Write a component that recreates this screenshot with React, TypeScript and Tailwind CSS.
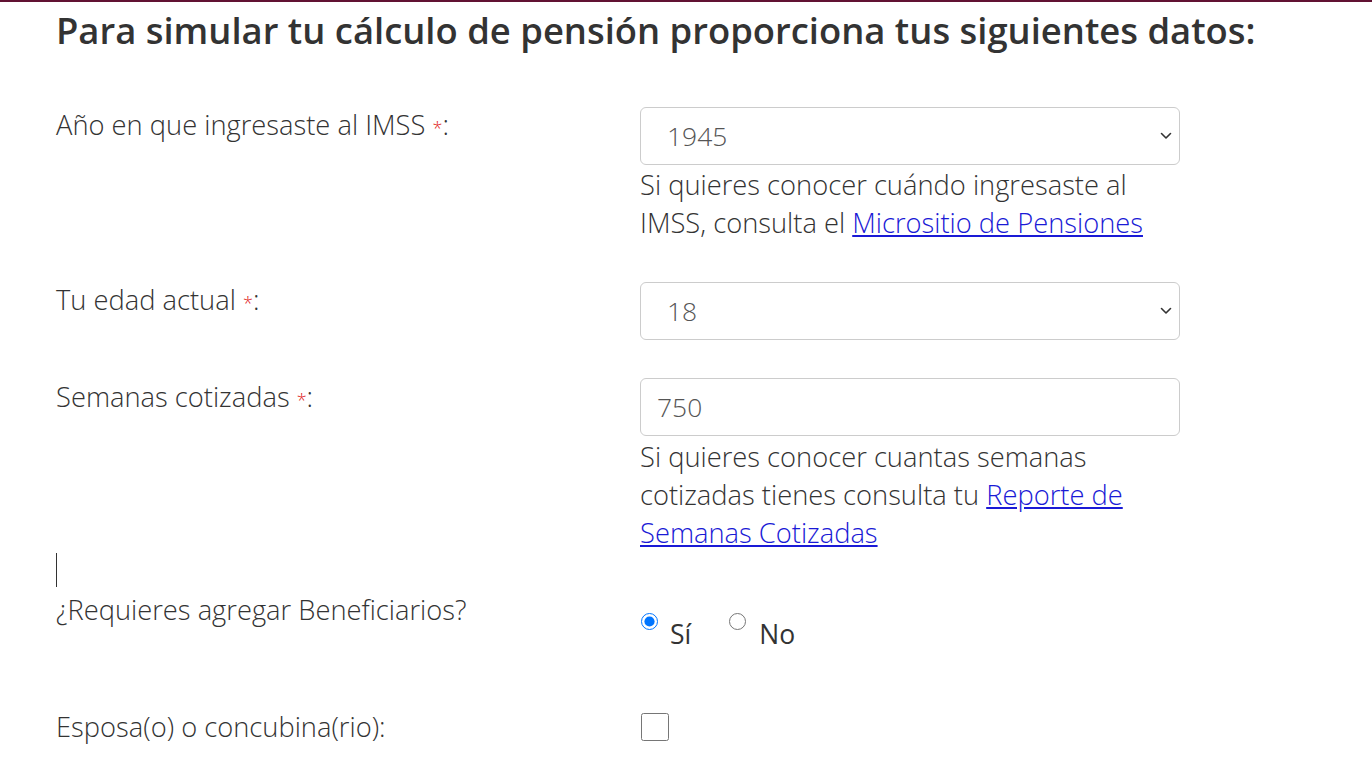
import { useState } from "react";

const Required = () => <span className="text-[18px] text-[#e02020] align-top relative top-[3px]">*</span>;

const Chevron = () => (
  <svg
    className="pointer-events-none absolute right-[8px] top-1/2 -translate-y-1/2"
    width="12"
    height="8"
    viewBox="0 0 12 8"
    fill="none"
  >
    <path d="M1.5 1.5 6 6l4.5-4.5" stroke="#333" strokeWidth="1.6" strokeLinecap="round" strokeLinejoin="round" />
  </svg>
);

const App = () => {
  const [year, setYear] = useState("1945");
  const [age, setAge] = useState("18");
  const [weeks, setWeeks] = useState("750");
  const [beneficiaries, setBeneficiaries] = useState("si");
  const [spouse, setSpouse] = useState(false);

  const years = Array.from({ length: 80 }, (_, i) => String(1945 + i));
  const ages = Array.from({ length: 83 }, (_, i) => String(18 + i));

  return (
    <div className="min-h-screen bg-white border-t-2 border-[#611232] font-['Open_Sans',sans-serif] text-[#333]">
      <div className="pl-[56px]">
        <h2 className="pt-[7px] text-[36.4px] font-semibold leading-[43px] text-[#333]">
          Para simular tu cálculo de pensión proporciona tus siguientes datos:
        </h2>

        <form className="mt-[54px] text-[27.3px] font-light leading-[38px]">
          {/* Año de ingreso */}
          <div className="grid grid-cols-[584px_540px]">
            <label className="text-[#333]">
              Año en que ingresaste al IMSS <Required />:
            </label>
            <div>
              <div className="relative mt-px">
                <select
                  value={year}
                  onChange={(e) => setYear(e.target.value)}
                  className="h-[58px] w-full appearance-none rounded-[6px] border border-[#ccc] bg-white pl-[26px] text-[26.4px] font-light text-[#555] outline-none"
                >
                  {years.map((y) => (
                    <option key={y} value={y}>
                      {y}
                    </option>
                  ))}
                </select>
                <Chevron />
              </div>
              <p className="mt-px">
                Si quieres conocer cuándo ingresaste al IMSS, consulta el{" "}
                <a href="#" className="text-[#1a1ad6] underline">
                  Micrositio de Pensiones
                </a>
              </p>
            </div>
          </div>

          {/* Edad */}
          <div className="mt-[39px] grid grid-cols-[584px_540px]">
            <label className="text-[#333]">
              Tu edad actual <Required />:
            </label>
            <div className="relative mt-px">
              <select
                value={age}
                onChange={(e) => setAge(e.target.value)}
                className="h-[58px] w-full appearance-none rounded-[6px] border border-[#ccc] bg-white pl-[26px] text-[26.4px] font-light text-[#555] outline-none"
              >
                {ages.map((a) => (
                  <option key={a} value={a}>
                    {a}
                  </option>
                ))}
              </select>
              <Chevron />
            </div>
          </div>

          {/* Semanas cotizadas */}
          <div className="mt-[38px] grid grid-cols-[584px_540px]">
            <label className="text-[#333]">
              Semanas cotizadas <Required />:
            </label>
            <div>
              <input
                type="text"
                value={weeks}
                onChange={(e) => setWeeks(e.target.value)}
                className="h-[58px] w-full rounded-[6px] border border-[#ccc] bg-white pl-[16px] text-[26.4px] font-light text-[#555] outline-none"
              />
              <p className="mt-[2px]">
                Si quieres conocer cuantas semanas cotizadas tienes consulta tu{" "}
                <a href="#" className="text-[#1a1ad6] underline">
                  Reporte de Semanas Cotizadas
                </a>
              </p>
            </div>
          </div>

          <div className="mt-px h-[34px] w-px bg-[#333]" />

          {/* Beneficiarios */}
          <div className="mt-[4px] grid grid-cols-[584px_540px]">
            <label className="text-[#333]">¿Requieres agregar Beneficiarios?</label>
            <div className="flex pt-[22px] text-[26.5px] font-normal">
              <label className="flex items-start">
                <input
                  type="radio"
                  name="beneficiarios"
                  checked={beneficiaries === "si"}
                  onChange={() => setBeneficiaries("si")}
                  className="m-0 ml-px h-[17px] w-[17px]"
                />
                <span className="ml-[12px] mt-[2px]">Sí</span>
              </label>
              <label className="ml-[38px] flex items-start">
                <input
                  type="radio"
                  name="beneficiarios"
                  checked={beneficiaries === "no"}
                  onChange={() => setBeneficiaries("no")}
                  className="m-0 h-[17px] w-[17px]"
                />
                <span className="ml-[13px] mt-[2px]">No</span>
              </label>
            </div>
          </div>

          {/* Esposa */}
          <div className="mt-[55px] grid grid-cols-[584px_540px]">
            <label className="text-[#333]">Esposa(o) o concubina(rio):</label>
            <div className="pt-[5px]">
              <input
                type="checkbox"
                checked={spouse}
                onChange={(e) => setSpouse(e.target.checked)}
                className="m-0 ml-px block h-[28px] w-[28px]"
              />
            </div>
          </div>
        </form>
      </div>
    </div>
  );
};

export default App;
